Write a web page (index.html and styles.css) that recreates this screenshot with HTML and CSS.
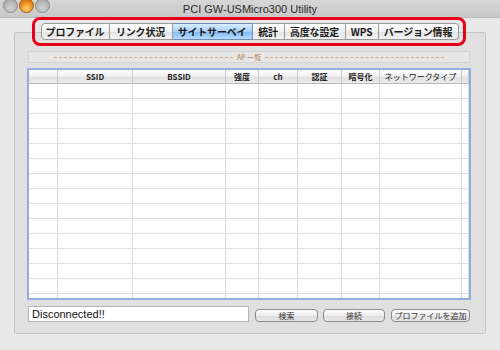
FILE: index.html
```html
<!DOCTYPE html>
<html lang="ja">
<head>
    <meta charset="UTF-8">
    <link rel="stylesheet" href="styles.css">
    <title>PCI GW-USMicro300 Utility</title>
</head>
<body>
    <div class="window">
        <div class="titlebar">
            <div class="lights">
                <span class="light"></span>
                <span class="light orange"></span>
                <span class="light"></span>
            </div>
            <div class="title">PCI GW-USMicro300 Utility</div>
        </div>

        <div class="content">
            <div class="tabs">
                <div class="tab">プロファイル</div>
                <div class="tab">リンク状況</div>
                <div class="tab active">サイトサーベイ</div>
                <div class="tab">統計</div>
                <div class="tab">高度な設定</div>
                <div class="tab">WPS</div>
                <div class="tab">バージョン情報</div>
            </div>

            <div class="panel">
                <div class="ap-title"><span>AP 一覧</span></div>

                <div class="list">
                    <table>
                        <thead>
                            <tr>
                                <th class="c1"></th>
                                <th class="c2">SSID</th>
                                <th class="c3">BSSID</th>
                                <th class="c4">強度</th>
                                <th class="c5">ch</th>
                                <th class="c6">認証</th>
                                <th class="c7">暗号化</th>
                                <th class="c8">ネットワークタイプ</th>
                                <th class="c9"></th>
                            </tr>
                        </thead>
                        <tbody>
                            <tr><td></td><td></td><td></td><td></td><td></td><td></td><td></td><td></td><td></td></tr>
                            <tr><td></td><td></td><td></td><td></td><td></td><td></td><td></td><td></td><td></td></tr>
                            <tr><td></td><td></td><td></td><td></td><td></td><td></td><td></td><td></td><td></td></tr>
                            <tr><td></td><td></td><td></td><td></td><td></td><td></td><td></td><td></td><td></td></tr>
                            <tr><td></td><td></td><td></td><td></td><td></td><td></td><td></td><td></td><td></td></tr>
                            <tr><td></td><td></td><td></td><td></td><td></td><td></td><td></td><td></td><td></td></tr>
                            <tr><td></td><td></td><td></td><td></td><td></td><td></td><td></td><td></td><td></td></tr>
                            <tr><td></td><td></td><td></td><td></td><td></td><td></td><td></td><td></td><td></td></tr>
                            <tr><td></td><td></td><td></td><td></td><td></td><td></td><td></td><td></td><td></td></tr>
                            <tr><td></td><td></td><td></td><td></td><td></td><td></td><td></td><td></td><td></td></tr>
                            <tr><td></td><td></td><td></td><td></td><td></td><td></td><td></td><td></td><td></td></tr>
                            <tr><td></td><td></td><td></td><td></td><td></td><td></td><td></td><td></td><td></td></tr>
                            <tr><td></td><td></td><td></td><td></td><td></td><td></td><td></td><td></td><td></td></tr>
                            <tr><td></td><td></td><td></td><td></td><td></td><td></td><td></td><td></td><td></td></tr>
                            <tr><td></td><td></td><td></td><td></td><td></td><td></td><td></td><td></td><td></td></tr>
                        </tbody>
                    </table>
                </div>

                <div class="bottom">
                    <div class="status">Disconnected!!</div>
                    <button class="btn btn-search">検索</button>
                    <button class="btn btn-connect">接続</button>
                    <button class="btn btn-add">プロファイルを追加</button>
                </div>
            </div>
        </div>

        <div class="highlight"></div>
    </div>
</body>
</html>
```

FILE: styles.css
```css
body {
    margin: 0;
    font-family: "Liberation Sans", "Noto Sans CJK JP", sans-serif;
    background-color: #e8e8e8;
}

.window {
    position: relative;
    width: 500px;
    height: 350px;
    overflow: hidden;
    background-color: #e8e8e8;
}

.titlebar {
    position: relative;
    height: 18px;
    background: linear-gradient(#d6d6d6, #c8c8c8);
    border-bottom: 1px solid #b8b8b8;
    box-sizing: border-box;
}

.lights {
    position: absolute;
    left: 3px;
    top: 0;
    display: flex;
    gap: 1px;
}

.light {
    width: 13px;
    height: 13px;
    border-radius: 50%;
    background: radial-gradient(circle at 50% 70%, #d4d4d4, #9c9c9c);
    border: 1px solid #8c8c8c;
    margin-top: -2px;
}

.light.orange {
    background: radial-gradient(circle at 50% 75%, #ffd46a, #e07a10 70%, #b85a00);
    border-color: #a65a10;
}

.title {
    text-align: center;
    font-size: 11px;
    line-height: 18px;
    color: #2a2a2a;
}

.content {
    padding: 5px 14px 0;
}

.tabs {
    position: relative;
    z-index: 1;
    display: flex;
    justify-content: center;
    margin-left: -1px;
}

.tab {
    height: 17px;
    line-height: 15px;
    padding: 0;
    text-align: center;
    white-space: nowrap;
    font-family: "Noto Sans CJK JP", sans-serif;
    font-size: 10px;
    font-weight: bold;
    letter-spacing: -0.2px;
    color: #1a1a1a;
    background: linear-gradient(#ffffff, #f2f2f2 50%, #e2e2e2 50%, #f4f4f4);
    border: 1px solid #9a9a9a;
    border-left: none;
    box-sizing: border-box;
}

.tab:first-child {
    border-left: 1px solid #9a9a9a;
    border-radius: 4px 0 0 4px;
    width: 69px;
}

.tab:last-child {
    border-radius: 0 4px 4px 0;
    width: 80px;
}

.tab:nth-child(2) { width: 63px; }
.tab:nth-child(3) { width: 80px; }
.tab:nth-child(4) { width: 32px; }
.tab:nth-child(5) { width: 61px; }
.tab:nth-child(6) { width: 33px; }

.tab.active {
    background: linear-gradient(#d8ecff, #a8d0fa 50%, #7fb8f4 50%, #b6dcff);
    border-color: #6d8fb8;
}

.panel {
    margin-top: -8px;
    height: 302px;
    padding: 18px 14px 0 12px;
    background-color: #e0e0e0;
    border: 1px solid #c6c6c6;
    border-radius: 2px;
    box-sizing: border-box;
}

.ap-title {
    display: flex;
    align-items: center;
    gap: 4px;
    height: 12px;
    margin: 0 1px;
    padding: 0 25px;
    background-color: #e6e6e6;
    border: 1px solid #d2d2d2;
    font-family: "Noto Sans CJK JP", sans-serif;
    font-size: 7px;
    font-weight: bold;
    color: #c49a78;
    box-sizing: border-box;
}

.ap-title::before,
.ap-title::after {
    content: "";
    flex: 1;
    border-top: 1px dashed #d8a884;
}

.list {
    margin-top: 5px;
    height: 232px;
    border: 2px solid #8fb0dc;
    background-color: #ffffff;
    overflow: hidden;
    box-sizing: border-box;
}

table {
    width: 440px;
    border-collapse: collapse;
    table-layout: fixed;
}

th {
    height: 13px;
    padding: 0;
    white-space: nowrap;
    font-family: "Noto Sans CJK JP", sans-serif;
    font-size: 8px;
    font-weight: bold;
    color: #222222;
    background: linear-gradient(#ffffff, #eeeeee 50%, #e0e0e0 51%, #ececec);
    border-right: 1px solid #c8c8c8;
    border-bottom: 1px solid #b8b8b8;
}

th.c8 {
    font-weight: normal;
    color: #111111;
}

td {
    height: 14px;
    padding: 0;
    border-right: 1px solid #dcdcdc;
    border-bottom: 1px solid #e0e0e0;
}

.c1 { width: 28px; }
.c2 { width: 74px; }
.c3 { width: 92px; }
.c4 { width: 32px; }
.c5 { width: 38px; }
.c6 { width: 43px; }
.c7 { width: 37px; }
.c8 { width: 81px; }
.c9 { width: 6px; }

.bottom {
    display: flex;
    align-items: flex-end;
    margin-top: 6px;
    margin-left: 1px;
}

.status {
    width: 221px;
    height: 16px;
    padding-left: 3px;
    font-size: 11px;
    line-height: 15px;
    color: #111111;
    background-color: #ffffff;
    border: 1px solid #b4b4b4;
    box-sizing: border-box;
}

.btn {
    height: 13px;
    padding: 0;
    margin-left: 6px;
    white-space: nowrap;
    font-family: "Noto Sans CJK JP", sans-serif;
    font-size: 8px;
    line-height: 11px;
    color: #333333;
    background: linear-gradient(#fdfdfd, #ececec 50%, #dcdcdc 51%, #e8e8e8);
    border: 1px solid #8c8c8c;
    border-radius: 4px;
}

.btn-search { width: 63px; }
.btn-connect { width: 62px; margin-left: 5px; }
.btn-add { width: 79px; }

.highlight {
    position: absolute;
    left: 32px;
    top: 17px;
    width: 434px;
    height: 29px;
    border: 3px solid #e8001a;
    border-radius: 8px;
    box-sizing: border-box;
}
```
